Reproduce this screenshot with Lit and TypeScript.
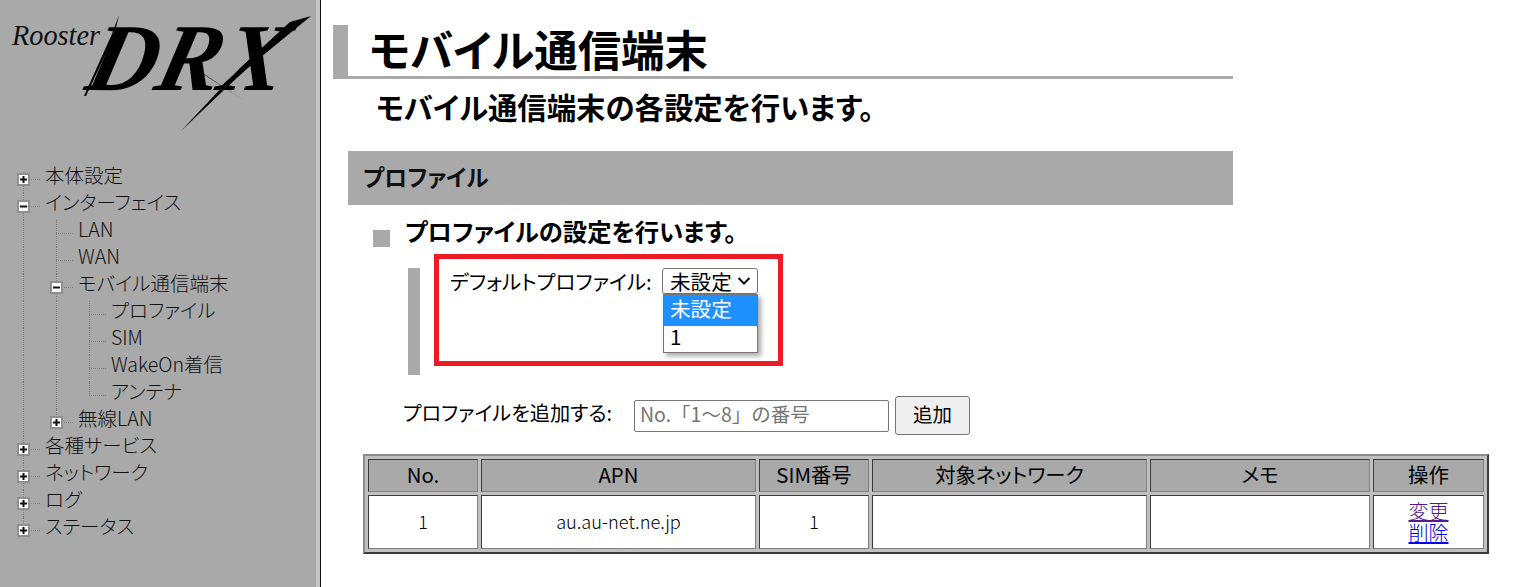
import { LitElement, html, svg, css, nothing } from "lit";
import { customElement } from "lit/decorators.js";

interface Row { cells: string[]; label: string; }

const rows: Row[] = [
  { cells: ["plus first"], label: "本体設定" },
  { cells: ["minus"], label: "インターフェイス" },
  { cells: ["v", "t"], label: "LAN" },
  { cells: ["v", "t"], label: "WAN" },
  { cells: ["v", "minus"], label: "モバイル通信端末" },
  { cells: ["v", "v", "t"], label: "プロファイル" },
  { cells: ["v", "v", "t"], label: "SIM" },
  { cells: ["v", "v", "t"], label: "WakeOn着信" },
  { cells: ["v", "v", "l"], label: "アンテナ" },
  { cells: ["v", "plus last"], label: "無線LAN" },
  { cells: ["plus"], label: "各種サービス" },
  { cells: ["plus"], label: "ネットワーク" },
  { cells: ["plus"], label: "ログ" },
  { cells: ["plus last"], label: "ステータス" },
];

@customElement("app-root")
export class AppRoot extends LitElement {
  static styles = css`
    :host {
      display: block;
      height: 587px;
      overflow: hidden;
      background: #fff;
      color: #000;
      font-family: "Noto Sans CJK JP", "Liberation Sans", sans-serif;
      font-feature-settings: "palt";
      font-size: 20px;
    }
    .page { display: flex; height: 587px; }
    .side {
      flex: none;
      width: 316px;
      background: #a9a9a9;
      border-right: 4px solid #c4c4c4;
      box-shadow: 1px 0 0 #111;
    }
    .logo { display: block; width: 316px; height: 166px; }
    .row { display: flex; align-items: center; height: 27px; padding-left: 7px; gap: 5px; line-height: 27px; }
    .row .cells { display: flex; }
    .row .label { font-size: 19.5px; position: relative; top: -5px; white-space: nowrap; color: #111; font-weight: 300; }
    .cell { width: 33px; height: 27px; flex: none; display: flex; align-items: center; justify-content: center; position: relative; }
    .cell::before, .cell::after { content: ""; position: absolute; }
    .cell.v::before, .cell.t::before, .cell.minus::before, .cell.plus::before {
      left: 16px; top: 0; bottom: 0; border-left: 1px dotted #7c7c7c;
    }
    .cell.l::before { left: 16px; top: 0; height: 14px; border-left: 1px dotted #7c7c7c; }
    .cell.plus.first::before { top: 14px; }
    .cell.plus.last::before { bottom: 13px; }
    .cell.t::after, .cell.l::after, .cell.minus::after, .cell.plus::after {
      left: 16px; right: 0; top: 13px; border-top: 1px dotted #7c7c7c;
    }
    .box {
      position: relative;
      z-index: 1;
      box-sizing: border-box;
      width: 13px; height: 13px;
      background: #fff;
      border: 2px solid #8f8f8f;
      display: block;
    }
    .box svg { display: block; width: 9px; height: 9px; }

    .main { flex: 1; min-width: 0; padding: 25px 0 0 13px; position: relative; }
    .title {
      width: 900px; box-sizing: border-box; height: 54px;
      border-left: 15px solid #a9a9a9; border-bottom: 3px solid #a9a9a9;
      padding-left: 21px;
      font-size: 43.4px; font-weight: 700; line-height: 46px; white-space: nowrap;
      color: #000;
    }
    .sub { margin: 10px 0 0 43px; font-size: 29.4px; font-weight: 700; line-height: 34px; padding-bottom: 2px; white-space: nowrap; }
    .head {
      margin: 26px 0 0 15px; width: 885px; height: 54px; box-sizing: border-box;
      background: #a9a9a9; padding-left: 15px;
      font-size: 22.8px; font-weight: 700; line-height: 52px; color: #111;
    }
    .lead { display: flex; margin: 11px 0 0 40px; align-items: flex-start; height: 40px; }
    .sq { width: 17px; height: 17px; background: #a9a9a9; margin: 14px 15px 0 0; flex: none; }
    .lead span { font-size: 24.3px; font-weight: 700; line-height: 30px; }
    .def { margin: 12px 0 0 75px; height: 107px; border-left: 12px solid #a9a9a9; padding-left: 30px; display: flex; align-items: flex-start; box-sizing: border-box; }
    .def label { font-size: 20.4px; line-height: 27px; width: 212px; flex: none; white-space: nowrap; }
    .sel {
      width: 96px; height: 26px; box-sizing: border-box;
      border: 1px solid #767676; border-radius: 3px; background: #fff;
      font-size: 20.6px; line-height: 24px; padding: 0 0 0 7px;
      display: flex; align-items: center; justify-content: space-between;
      color: #000;
    }
    .sel svg { width: 16px; height: 10px; margin-right: 5px; flex: none; }
    .add { display: flex; align-items: center; margin: 21px 0 0 70px; height: 39px; }
    .add label { font-size: 20.2px; width: 231px; flex: none; white-space: nowrap; position: relative; top: -3px; }
    .input {
      width: 255px; height: 32px; box-sizing: border-box;
      border: 1px solid #767676; border-radius: 2px;
      font-size: 19.5px; padding: 0 0 5px 5px; color: #000;
      font-family: inherit; font-feature-settings: normal;
    }
    .input::placeholder { color: #757575; }
    .btn {
      margin-left: 6px; width: 75px; height: 39px; box-sizing: border-box;
      border: 1px solid #767676; border-radius: 3px; background: #efefef;
      font-family: inherit; font-size: 19.5px; color: #000; padding: 0 0 5px;
    }
    table {
      margin: 19px 0 0 30px;
      table-layout: fixed; width: 1126px;
      border-collapse: separate; border-spacing: 3px;
      background: #c0c0c0;
      border: 2px solid; border-color: #8c8c8c #3c3c3c #3c3c3c #8c8c8c;
    }
    th, td {
      border: 1px solid; border-color: #3c3c3c #808080 #808080 #3c3c3c;
      padding: 0; text-align: center; font-weight: 400; box-sizing: border-box;
    }
    th { background: #a9a9a9; height: 33px; font-size: 20.4px; line-height: 26px; padding-bottom: 4px; }
    td { background: #fff; height: 54px; font-size: 18px; line-height: 26px; font-weight: 300; padding-bottom: 3px; }
    td.apn { font-size: 18.2px; }
    td.ops { padding-bottom: 0; }
    td a { display: block; font-size: 20px; line-height: 22px; text-decoration: underline; }
    a.seen { color: #551a8b; }
    a.fresh { color: #0000ee; }

    .popup {
      position: absolute; left: 343px; top: 294px; width: 95px;
      box-sizing: border-box; height: 59px;
      background: #fff; border: 1px solid #767676;
      box-shadow: 3px 3px 5px rgba(0,0,0,.35);
      font-size: 20.6px; z-index: 3;
    }
    .popup div { height: 26px; line-height: 21px; padding-left: 6px; }
    .popup .on { background: #1e90ff; color: #fff; height: 31px; line-height: 27px; }
    .mark {
      position: absolute; left: 114px; top: 254px; width: 349px; height: 112px;
      box-sizing: border-box; border: 5px solid #ed1c24; z-index: 2; pointer-events: none;
    }
  `;

  private box(minus: boolean) {
    return html`<span class="box"><svg viewBox="0 0 9 9">
      <rect x="1" y="3.5" width="7" height="2" fill="#111"></rect>
      ${minus ? nothing : svg`<rect x="3.5" y="1" width="2" height="7" fill="#111"></rect>`}
    </svg></span>`;
  }

  private logo() {
    return html`<svg class="logo" viewBox="0 0 316 166" role="img" aria-label="Rooster DRX">
      <text x="12" y="45" font-family="Liberation Serif" font-style="italic" font-size="29" textLength="88" lengthAdjust="spacingAndGlyphs" fill="#111">Rooster</text>
      <text x="0" y="0" transform="translate(83 90) skewX(-14)" font-family="Liberation Serif" font-weight="700" font-style="italic" font-size="96" textLength="196" lengthAdjust="spacingAndGlyphs" fill="#000">DRX</text>
      <polygon points="119,15 114,36 86,96 84,96 112,34" fill="#000"></polygon>
      <polygon points="311,16 290,22 240,68 181,131 245,70" fill="#000"></polygon>
      <polygon points="192,66 243,100 200,72" fill="#000"></polygon>
    </svg>`;
  }

  render() {
    const heads = ["No.", "APN", "SIM番号", "対象ネットワーク", "メモ", "操作"];
    const widths = [110, 275, 110, 275, 220, 111];
    return html`<div class="page">
      <nav class="side">
        ${this.logo()}
        <div class="tree">
          ${rows.map(r => html`<div class="row">
            <div class="cells">
              ${r.cells.map(c => html`<span class="cell ${c}">
                ${c.startsWith("plus") ? this.box(false) : c === "minus" ? this.box(true) : nothing}
              </span>`)}
            </div>
            <span class="label">${r.label}</span>
          </div>`)}
        </div>
      </nav>
      <main class="main">
        <div class="title">モバイル通信端末</div>
        <div class="sub">モバイル通信端末の各設定を行います。</div>
        <div class="head">プロファイル</div>
        <div class="lead"><i class="sq"></i><span>プロファイルの設定を行います。</span></div>
        <div class="def">
          <label>デフォルトプロファイル:</label>
          <div class="sel">未設定<svg viewBox="0 0 16 10"><path d="M2.5 2l5.5 5.5L13.5 2" fill="none" stroke="#111" stroke-width="2"></path></svg></div>
        </div>
        <div class="add">
          <label>プロファイルを追加する:</label>
          <input class="input" placeholder="No.「1～8」の番号" />
          <button class="btn">追加</button>
        </div>
        <table>
          <colgroup>${widths.map(w => html`<col style="width:${w}px" />`)}</colgroup>
          <thead><tr>${heads.map(h => html`<th>${h}</th>`)}</tr></thead>
          <tbody><tr>
            <td>1</td><td class="apn">au.au-net.ne.jp</td><td>1</td><td></td><td></td>
            <td class="ops"><a class="seen" href="#">変更</a><a class="fresh" href="#">削除</a></td>
          </tr></tbody>
        </table>
        <div class="popup"><div class="on">未設定</div><div>1</div></div>
        <div class="mark"></div>
      </main>
    </div>`;
  }
}
